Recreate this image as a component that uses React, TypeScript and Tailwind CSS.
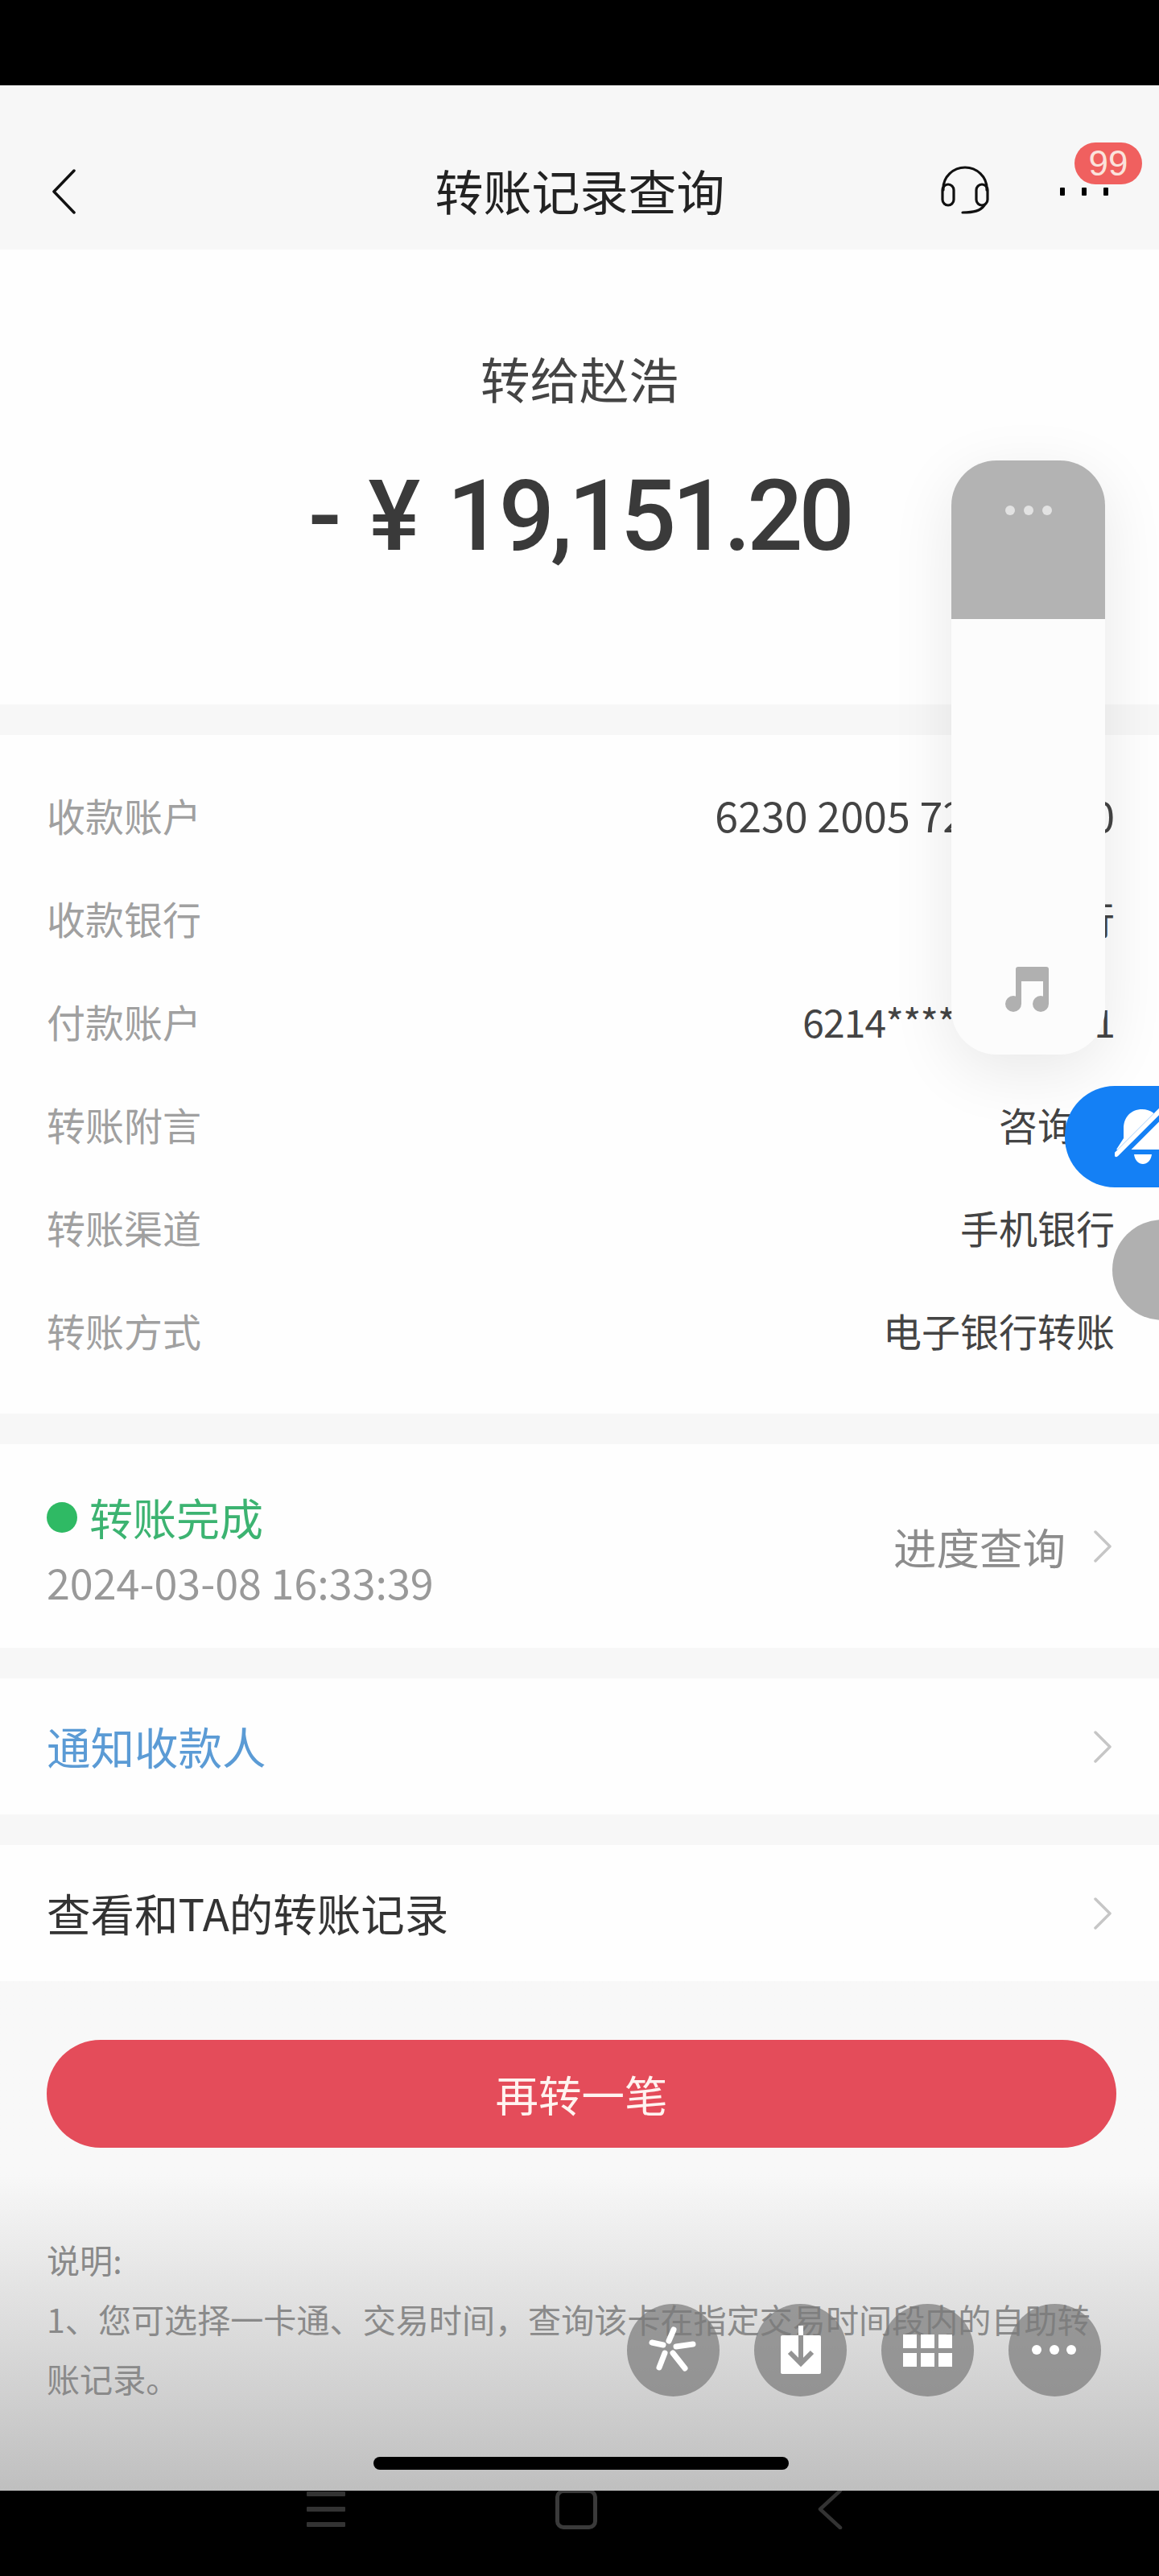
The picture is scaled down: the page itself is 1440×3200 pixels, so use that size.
const ROWS = [
  ["收款账户", "6230 2005 7200 0000"],
  ["收款银行", "工商银行"],
  ["付款账户", "6214************1"],
  ["转账附言", "咨询费"],
  ["转账渠道", "手机银行"],
  ["转账方式", "电子银行转账"],
];

function Chevron() {
  return (
    <svg width="24" height="40" viewBox="0 0 24 40" fill="none" stroke="#c6c6c6" strokeWidth="3.5" strokeLinecap="round" strokeLinejoin="round">
      <path d="M3 2l18 18L3 38" />
    </svg>
  );
}

function Gap() {
  return <div className="h-[38px] bg-[#f7f7f7]" />;
}

function Circle({ children }: { children: React.ReactNode }) {
  return (
    <div className="h-[115px] w-[115px] rounded-full bg-[#797979]/70">
      <svg width="115" height="115" viewBox="0 0 115 115">{children}</svg>
    </div>
  );
}

export default function App() {
  return (
    <div className="relative flex h-[3200px] w-[1440px] flex-col overflow-hidden bg-black [font-family:'Noto_Sans_CJK_SC','Liberation_Sans',sans-serif]">
      <div className="h-[106px] shrink-0 bg-black" />

      {/* header */}
      <div className="grid h-[204px] shrink-0 grid-cols-[1fr_auto_1fr] items-center bg-[#f7f7f7] pt-[56px] pr-[63px] pl-[64px]">
        <svg className="mt-[4px]" width="30" height="56" viewBox="0 0 30 56" fill="none" stroke="#111" strokeWidth="3.5" strokeLinecap="round" strokeLinejoin="round">
          <path d="M28 2L3 28l25 26" />
        </svg>
        <div className="text-[60px] leading-none text-[#222]">转账记录查询</div>
        <div className="flex items-center justify-end gap-[88px]">
          <svg width="60" height="60" viewBox="0 0 60 60" fill="none" stroke="#111" strokeWidth="3.2" strokeLinecap="round">
            <path d="M3 30V28a27 26 0 0 1 54 0v2" />
            <rect x="2" y="23" width="14" height="26" rx="7" />
            <rect x="44" y="23" width="14" height="26" rx="7" />
            <path d="M54 49c-5 7-13 9-27 9" />
          </svg>
          <div className="relative mt-[3px] flex gap-[21px]">
            <div className="h-[10px] w-[6px] rounded-[1px] bg-black" />
            <div className="h-[10px] w-[6px] rounded-[1px] bg-black" />
            <div className="h-[10px] w-[6px] rounded-[1px] bg-black" />
            <div className="absolute top-[-56px] left-[18px] flex h-[52px] w-[84px] items-center justify-center rounded-full bg-[#f0605f] text-[44px] leading-none text-[#fbe3dc] [font-family:'Liberation_Sans',sans-serif]">
              99
            </div>
          </div>
        </div>
      </div>

      {/* amount */}
      <div className="flex h-[565px] shrink-0 flex-col items-center bg-[#fefefe] pt-[128px]">
        <div className="text-[61.5px] leading-[64px] text-[#444]">转给赵浩</div>
        <div className="mt-[74px] flex items-center gap-[38px] text-[122px] leading-[132px] font-medium tracking-[-5px] text-[#3a3a3a] [font-family:Roboto,sans-serif]">
          <span>-</span>
          <span>¥</span>
          <span>19,151.20</span>
        </div>
      </div>
      <Gap />

      {/* details */}
      <div className="shrink-0 bg-[#fefefe] pt-[35px] pb-[40px] pr-[55px] pl-[58px]">
        {ROWS.map(([label, value], i) => (
          <div key={label} className="flex h-[128px] items-center justify-between text-[48px] leading-none">
            <span className="text-[#a0a0a0]">{label}</span>
            <span className={i === 0 ? "text-[52px] text-[#444]" : i === 2 ? "tracking-[-0.85px] text-[#444]" : "text-[#444]"}>{value}</span>
          </div>
        ))}
      </div>
      <Gap />

      {/* status */}
      <div className="flex h-[253px] shrink-0 items-center justify-between bg-[#fefefe] pr-[58px] pl-[58px]">
        <div className="flex flex-col gap-[20px] pt-[8px]">
          <div className="flex items-center gap-[15px] text-[54px] leading-[60px] text-[#3cb371]">
            <span className="h-[38px] w-[38px] rounded-full bg-[#2fba64]" />
            转账完成
          </div>
          <div className="text-[52px] leading-[60px] text-[#999]">2024-03-08 16:33:39</div>
        </div>
        <div className="flex items-center gap-[34px]">
          <span className="text-[53.5px] leading-none text-[#8c8c8c]">进度查询</span>
          <Chevron />
        </div>
      </div>
      <Gap />

      <div className="flex h-[169px] shrink-0 items-center justify-between bg-[#fefefe] pr-[58px] pl-[58px]">
        <span className="text-[54.5px] leading-none text-[#5b9bd5]">通知收款人</span>
        <Chevron />
      </div>
      <Gap />

      <div className="flex h-[169px] shrink-0 items-center justify-between bg-[#fefefe] pr-[58px] pl-[58px]">
        <span className="text-[54.5px] leading-none text-[#333]">查看和TA的转账记录</span>
        <Chevron />
      </div>

      {/* footer */}
      <div className="relative h-[633px] shrink-0 bg-gradient-to-b from-[#f8f8f8] from-[38%] to-[#bfbfbf] pt-[73px] pr-[53px] pl-[58px]">
        <button className="flex h-[134px] w-[1329px] items-center justify-center rounded-full bg-[#e44c5a] text-[53.5px] leading-none text-[#fff3f0]">
          再转一笔
        </button>
        <div className="mt-[101px] text-[41.1px] leading-[74px] text-[#8a8a8a]">
          <p>说明:</p>
          <p>1、您可选择一卡通、交易时间，查询该卡在指定交易时间段内的自助转账记录。</p>
        </div>
        <div className="absolute top-[591px] left-[464px] h-[16px] w-[516px] rounded-full bg-black" />
      </div>

      {/* system nav */}
      <div className="flex h-[106px] shrink-0 items-start bg-black pl-[381px]">
        <div className="flex h-[45px] w-[48px] flex-col justify-between pt-[1px]">
          <div className="h-[6px] rounded-[1px] bg-[#333]" />
          <div className="h-[6px] rounded-[1px] bg-[#333]" />
          <div className="h-[6px] rounded-[1px] bg-[#333]" />
        </div>
        <div className="mt-[-2px] ml-[261px] h-[50px] w-[52px] rounded-[10px] border-[5px] border-[#3a3a3a]" />
        <svg className="mt-[-2px] ml-[273px]" width="32" height="50" viewBox="0 0 32 50" fill="none" stroke="#333" strokeWidth="4.5" strokeLinecap="round" strokeLinejoin="round">
          <path d="M29 2L4 25l25 23" />
        </svg>
      </div>

      {/* floating music panel */}
      <div className="absolute top-[572px] left-[1182px] flex h-[738px] w-[191px] flex-col overflow-hidden rounded-[56px] bg-[#fcfcfc] shadow-[0_20px_80px_rgba(0,0,0,0.09)]">
        <div className="flex h-[197px] shrink-0 items-start justify-center gap-[11px] bg-[#b3b3b3] pt-[56px]">
          <div className="h-[12px] w-[12px] rounded-full bg-[#e2e2e2]" />
          <div className="h-[12px] w-[12px] rounded-full bg-[#e2e2e2]" />
          <div className="h-[12px] w-[12px] rounded-full bg-[#e2e2e2]" />
        </div>
        <div className="flex flex-1 items-start justify-center pt-[432px] pr-[3px]">
          <svg width="54" height="56" viewBox="0 0 54 56" fill="#b0b0b0">
            <path d="M13 3a3 3 0 0 1 3-3h35a3 3 0 0 1 3 3v43h-7V18H20v28h-7z" />
            <circle cx="10" cy="46" r="10" />
            <circle cx="44" cy="46" r="10" />
          </svg>
        </div>
      </div>

      {/* side pills */}
      <div className="absolute top-[1349px] left-[1323px] flex h-[126px] w-[140px] items-center rounded-l-[62px] bg-[#1480f5] pl-[62px]">
        <svg width="70" height="72" viewBox="0 0 70 72">
          <path d="M34 2c-14 0-23 10-23 24v12L2 52h62L56 38V26C56 12 48 2 34 2z" fill="#fff" />
          <path d="M24 58c1 8 6 12 11 12s10-4 11-12z" fill="#fff" />
          <path d="M4 60L62 2" stroke="#1480f5" strokeWidth="12" />
          <path d="M2 58L60 0" stroke="#fff" strokeWidth="6" strokeLinecap="round" />
        </svg>
      </div>
      <div className="absolute top-[1515px] left-[1382px] h-[125px] w-[120px] rounded-l-full bg-[#b0b0b0]" />

      {/* floating actions */}
      <div className="absolute top-[2862px] left-[779px] flex gap-[43px]">
        <Circle>
          <g stroke="#fff" strokeLinecap="round">
            <path d="M58 32L52 46" strokeWidth="7" />
            <path d="M31 48L45 51" strokeWidth="7" />
            <path d="M82 50L61 53" strokeWidth="7" />
            <path d="M47 61L40 79" strokeWidth="7" />
            <path d="M57 61L72 80" strokeWidth="7" />
          </g>
        </Circle>
        <Circle>
          <rect x="33" y="39" width="50" height="48" rx="2" fill="#fff" />
          <path d="M58 27v12" stroke="#fff" strokeWidth="6" />
          <path d="M58 39v34" stroke="#939393" strokeWidth="6" />
          <path d="M44 60l14 14 14-14" fill="none" stroke="#939393" strokeWidth="6" />
        </Circle>
        <Circle>
          <g fill="#fff">
            <rect x="27" y="38" width="17" height="17" />
            <rect x="49" y="38" width="17" height="17" />
            <rect x="71" y="38" width="17" height="17" />
            <rect x="27" y="61" width="17" height="17" />
            <rect x="49" y="61" width="17" height="17" />
            <rect x="71" y="61" width="17" height="17" />
          </g>
        </Circle>
        <Circle>
          <g fill="#fff">
            <circle cx="35" cy="57" r="6" />
            <circle cx="57" cy="57" r="6" />
            <circle cx="78" cy="57" r="6" />
          </g>
        </Circle>
      </div>
    </div>
  );
}
